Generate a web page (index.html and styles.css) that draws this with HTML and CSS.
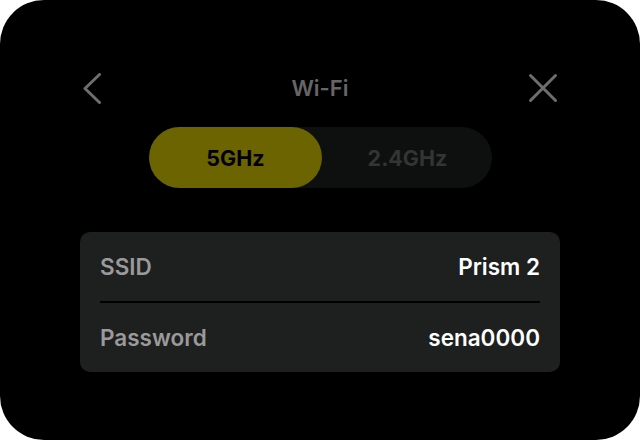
FILE: index.html
```html
<!DOCTYPE html>
<html lang="en">
<head>
<meta charset="utf-8">
<title>Wi-Fi</title>
<link rel="stylesheet" href="styles.css">
</head>
<body>
<div class="screen">
  <div class="header">
    <svg class="icon" width="32" height="32" viewBox="0 0 32 32" aria-label="Back">
      <path d="M19.5 2.5 L5 16.5 L19.5 30.5" fill="none" stroke="#6e6e6e" stroke-width="3" stroke-linecap="round" stroke-linejoin="round"/>
    </svg>
    <div class="title">Wi-Fi</div>
    <svg class="icon" width="32" height="32" viewBox="0 0 32 32" aria-label="Close">
      <path d="M3.5 3.5 L28.5 28.5 M28.5 3.5 L3.5 28.5" fill="none" stroke="#6e6e6e" stroke-width="3" stroke-linecap="round"/>
    </svg>
  </div>
  <div class="segment">
    <div class="seg-item active">5GHz</div>
    <div class="seg-item">2.4GHz</div>
  </div>
  <div class="card">
    <div class="row">
      <span class="label">SSID</span>
      <span class="value">Prism 2</span>
    </div>
    <div class="divider"></div>
    <div class="row">
      <span class="label">Password</span>
      <span class="value">sena0000</span>
    </div>
  </div>
</div>
</body>
</html>
```
FILE: styles.css
```css
html, body {
  margin: 0;
  padding: 0;
  background: #ffffff;
}
body {
  width: 640px;
  height: 440px;
  font-family: Inter, "Noto Sans", "Liberation Sans", sans-serif;
}
.screen {
  width: 640px;
  height: 440px;
  box-sizing: border-box;
  background: #000000;
  border-radius: 44px;
  padding: 72px 80px 0;
  display: flex;
  flex-direction: column;
  align-items: center;
}
.header {
  width: 480px;
  height: 32px;
  display: flex;
  align-items: center;
  justify-content: space-between;
}
.header .icon:last-child {
  margin-right: 1px;
}
.title {
  color: #666666;
  font-size: 22px;
  font-weight: 600;
  padding-left: 1px;
}
.segment {
  margin-top: 23px;
  width: 343px;
  height: 61px;
  border-radius: 31px;
  background: #0e0f0f;
  display: flex;
}
.seg-item {
  flex: 1;
  display: flex;
  align-items: center;
  justify-content: center;
  border-radius: 31px;
  font-size: 21.5px;
  font-weight: 700;
  color: #333434;
}
.seg-item.active {
  flex: 0 0 172px;
  background: #6b6400;
  color: #000000;
  padding-left: 1px;
}
.seg-item:not(.active) {
  padding-left: 2px;
}
.card {
  margin-top: 44px;
  width: 480px;
  box-sizing: border-box;
  background: #1e1f1f;
  border-radius: 10px;
  padding: 0 20px;
  display: flex;
  flex-direction: column;
}
.row {
  height: 69px;
  display: flex;
  align-items: center;
  justify-content: space-between;
  font-size: 22.5px;
  font-weight: 600;
}
.label {
  color: #9a9a9a;
}
.value {
  color: #ffffff;
}
.divider {
  height: 2px;
  background: #000000;
}
```
